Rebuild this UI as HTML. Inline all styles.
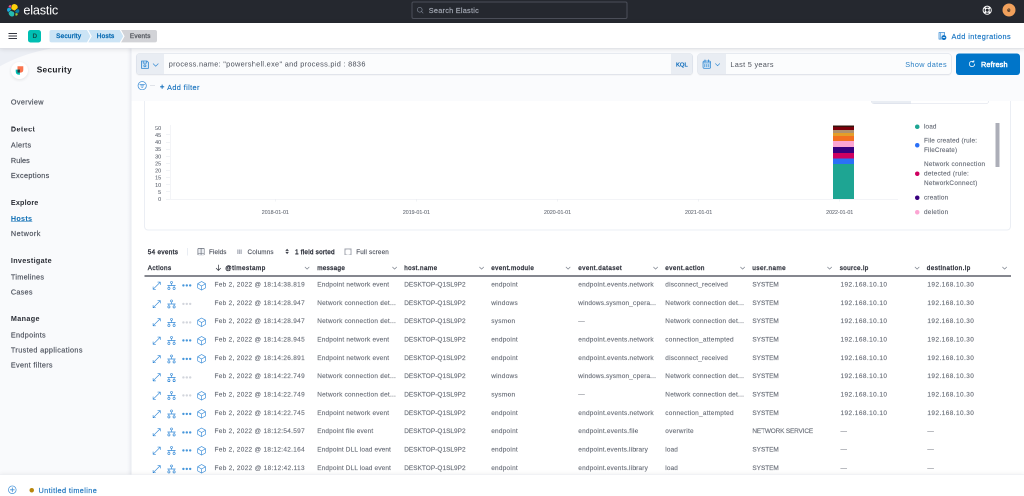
<!DOCTYPE html>
<html lang="en"><head><meta charset="utf-8"><title>Hosts - Events - Security - Elastic</title>
<style>
html,body{margin:0;padding:0;}
body{width:1024px;height:496px;overflow:hidden;position:relative;background:#fff;font-family:"Liberation Sans", sans-serif;-webkit-font-smoothing:antialiased;}
#app{position:absolute;left:0;top:0;width:2048px;height:992px;overflow:hidden;transform:scale(0.5);transform-origin:0 0;will-change:transform;}
.b{position:absolute;display:block;}
.t{position:absolute;white-space:nowrap;line-height:1;transform:translateY(-50%);}
</style></head>
<body><div id="app">
<div class="b" style="left:0px;top:0px;width:2048px;height:992px;background:#ffffff;"></div>
<div class="b" style="left:263px;top:96px;width:1785px;height:105.7px;background:#fafbfd;"></div>
<div class="b" style="left:0px;top:96px;width:263px;height:896px;background:#f9fafc;"></div>
<svg class="b" style="left:0px;top:96px;" width="120" height="40" viewBox="0 0 60 20"><path d="M0 0H54Q24 5 0 18.2Z" fill="#eceff5"/></svg>
<div class="b" style="left:253px;top:96px;width:10px;height:896px;background:linear-gradient(90deg, rgba(200,205,218,0) 0%, rgba(200,205,218,0.12) 50%, rgba(200,205,218,0.38) 100%);"></div>
<div class="b" style="left:0px;top:0px;width:2048px;height:46px;background:#25282f;"></div>
<div class="b" style="left:0px;top:46px;width:2048px;height:50px;background:#ffffff;box-shadow:0 1px 0 #dcdee5, 0 2px 10px rgba(0,0,0,0.12);"></div>
<svg class="b" style="left:12.8px;top:7.2px;" width="26.8" height="26.8" viewBox="0 0 32 32"><path d="M12.58 13.79l7 3.19 7.07-6.19a7.8 7.8 0 0 0 .15-1.55A7.86 7.86 0 0 0 12.46 4.8l-1.17 6.1z" fill="#fed10a"/><path d="M5.33 21.22a7.9 7.9 0 0 0 12.2 8.2l1.16-6.07-1.55-2.97-7.03-3.2z" fill="#24bbb1"/><path d="M5.29 9.1l4.8 1.13 1.05-5.45A3.79 3.79 0 0 0 5.29 9.1" fill="#ef5098"/><path d="M4.87 10.25a5.34 5.34 0 0 0-.05 10.06l6.73-6.08-1.23-2.64z" fill="#17a8e0"/><path d="M20.87 28.21a3.76 3.76 0 0 0 5.82-4.3l-4.8-1.12z" fill="#93c83e"/><path d="M21.85 21.53l5.28 1.23a5.34 5.34 0 0 0 .05-10.06l-6.9 6.05z" fill="#0779a1"/></svg>
<div class="t" style="left:46.8px;top:20.7px;font-size:25.4px;color:#ffffff;letter-spacing:-0.4px;">elastic</div>
<div class="b" style="left:823px;top:3px;width:432px;height:35px;background:#25282f;border:2px solid #4b4e58;border-radius:4px;box-sizing:border-box;"></div>
<svg class="b" style="left:832.6px;top:13px;" width="14.8" height="14.8" viewBox="0 0 16 16"><circle cx="7" cy="7" r="5.2" fill="none" stroke="#858d9b" stroke-width="1.3"/><path d="M11 11l3.2 3.2" stroke="#858d9b" stroke-width="1.3" stroke-linecap="round"/></svg>
<div class="t" style="left:857.6px;top:20.9px;font-size:14.6px;color:#a6abb6;-webkit-text-stroke:0.32px #a6abb6;letter-spacing:0.51px;">Search Elastic</div>
<svg class="b" style="left:1965.2px;top:11px;" width="18.8" height="18.8" viewBox="0 0 9.4 9.4"><circle cx="4.7" cy="4.7" r="4.1" fill="none" stroke="#fff" stroke-width="0.95"/><circle cx="4.7" cy="4.7" r="2.0" fill="none" stroke="#fff" stroke-width="0.95"/><path d="M1.9 1.9L3.2 3.2M7.5 1.9L6.2 3.2M1.9 7.5L3.2 6.2M7.5 7.5L6.2 6.2" stroke="#fff" stroke-width="1.7"/></svg>
<div class="b" style="left:2004.6px;top:7.4px;width:26px;height:26px;background:#f1a15c;border-radius:50%;"></div>
<div class="t" style="left:2014.2px;top:20.1px;font-size:12.4px;color:#2b2118;font-weight:700;">e</div>
<div class="b" style="left:17.2px;top:66.1px;width:17px;height:1.8px;background:#343741;"></div>
<div class="b" style="left:17.2px;top:71.26px;width:17px;height:1.8px;background:#343741;"></div>
<div class="b" style="left:17.2px;top:76.42px;width:17px;height:1.8px;background:#343741;"></div>
<div class="b" style="left:56px;top:60px;width:26px;height:25px;background:#00bfb3;border-radius:5px;"></div>
<div class="t" style="left:65.1px;top:72.1px;font-size:12.8px;color:#0c4f4b;font-weight:700;">D</div>
<svg class="b" style="left:99px;top:60px;" width="220" height="24.8" viewBox="0 0 110 12.4"><path d="M2 0H37.5L41 6.2L37.5 12.4H2Q0 12.4 0 10.4V2Q0 0 2 0Z" fill="#cce4f5"/><path d="M38.8 0H70.3L73.8 6.2L70.3 12.4H38.8L42.3 6.2Z" fill="#cce4f5"/><path d="M71.6 0H105.5Q107.5 0 107.5 2V10.4Q107.5 12.4 105.5 12.4H71.6L75.1 6.2Z" fill="#d2d3d7"/></svg>
<div class="t" style="left:112.2px;top:72.3px;font-size:12.8px;color:#0a6cb3;-webkit-text-stroke:0.77px #0a6cb3;letter-spacing:0.52px;">Security</div>
<div class="t" style="left:193.4px;top:72.3px;font-size:12.8px;color:#0a6cb3;-webkit-text-stroke:0.77px #0a6cb3;letter-spacing:0.58px;">Hosts</div>
<div class="t" style="left:259.8px;top:72.3px;font-size:12.8px;color:#5f6269;-webkit-text-stroke:0.77px #5f6269;letter-spacing:0.41px;">Events</div>
<svg class="b" style="left:1877.2px;top:63.8px;" width="16" height="16.4" viewBox="0 0 8 8.2"><path d="M6.1 3.2V0.5H0.5V7.1H3.2" fill="#e3f0fa" stroke="#3f8fd6" stroke-width="0.75" stroke-linejoin="round"/><path d="M2 0.6V7" stroke="#3f8fd6" stroke-width="0.6"/><circle cx="5.4" cy="5.6" r="2.45" fill="#0f72c4"/><path d="M4.2 5.6H6.6" stroke="#fff" stroke-width="0.8"/></svg>
<div class="t" style="left:1903px;top:72.9px;font-size:14.6px;color:#1573c2;-webkit-text-stroke:0.32px #1573c2;letter-spacing:0.86px;">Add integrations</div>
<div class="b" style="left:21.7px;top:124.2px;width:34px;height:34px;background:#ffffff;border-radius:50%;box-shadow:0 2px 6px rgba(0,0,0,0.10);"></div>
<svg class="b" style="left:30.6px;top:132px;" width="16" height="17.6" viewBox="0 0 80 88"><path d="M20 2H78V38Q78 66 50 66H20Z" fill="#fa744e"/><path d="M2 36H44V88H40Q2 88 2 52Z" fill="#00bfb3"/><path d="M20 36H44V66H20Z" fill="#343741"/></svg>
<div class="t" style="left:73.4px;top:140.4px;font-size:16.6px;color:#1a1c21;font-weight:700;letter-spacing:0.64px;">Security</div>
<div class="t" style="left:21.8px;top:203.98px;font-size:14.5px;color:#4a4f5a;-webkit-text-stroke:0.32px #4a4f5a;letter-spacing:0.67px;">Overview</div>
<div class="t" style="left:21.8px;top:258.41px;font-size:14.4px;color:#2b2e36;font-weight:700;letter-spacing:0.8px;">Detect</div>
<div class="t" style="left:21.8px;top:290.38px;font-size:14.5px;color:#4a4f5a;-webkit-text-stroke:0.32px #4a4f5a;letter-spacing:0.69px;">Alerts</div>
<div class="t" style="left:21.8px;top:320.78px;font-size:14.5px;color:#4a4f5a;-webkit-text-stroke:0.32px #4a4f5a;letter-spacing:0.15px;">Rules</div>
<div class="t" style="left:21.8px;top:351.18px;font-size:14.5px;color:#4a4f5a;-webkit-text-stroke:0.32px #4a4f5a;letter-spacing:0.65px;">Exceptions</div>
<div class="t" style="left:21.8px;top:405.01px;font-size:14.4px;color:#2b2e36;font-weight:700;letter-spacing:0.34px;">Explore</div>
<div class="t" style="left:21.8px;top:437.01px;font-size:14.4px;color:#0a6cb3;font-weight:700;text-decoration:underline;text-underline-offset:1.2px;text-decoration-thickness:1px;letter-spacing:0.56px;">Hosts</div>
<div class="t" style="left:21.8px;top:467.38px;font-size:14.5px;color:#4a4f5a;-webkit-text-stroke:0.32px #4a4f5a;letter-spacing:0.95px;">Network</div>
<div class="t" style="left:21.8px;top:521.21px;font-size:14.4px;color:#2b2e36;font-weight:700;letter-spacing:0.63px;">Investigate</div>
<div class="t" style="left:21.8px;top:553.58px;font-size:14.5px;color:#4a4f5a;-webkit-text-stroke:0.32px #4a4f5a;letter-spacing:0.59px;">Timelines</div>
<div class="t" style="left:21.8px;top:583.98px;font-size:14.5px;color:#4a4f5a;-webkit-text-stroke:0.32px #4a4f5a;letter-spacing:0.5px;">Cases</div>
<div class="t" style="left:21.8px;top:637.41px;font-size:14.4px;color:#2b2e36;font-weight:700;letter-spacing:0.73px;">Manage</div>
<div class="t" style="left:21.8px;top:669.98px;font-size:14.5px;color:#4a4f5a;-webkit-text-stroke:0.32px #4a4f5a;letter-spacing:0.63px;">Endpoints</div>
<div class="t" style="left:21.8px;top:699.98px;font-size:14.5px;color:#4a4f5a;-webkit-text-stroke:0.32px #4a4f5a;letter-spacing:0.73px;">Trusted applications</div>
<div class="t" style="left:21.8px;top:730.18px;font-size:14.5px;color:#4a4f5a;-webkit-text-stroke:0.32px #4a4f5a;letter-spacing:0.63px;">Event filters</div>
<div class="b" style="left:272.2px;top:107.2px;width:1113.8px;height:42px;background:#fbfcfd;border:1px solid #d3d9e4;border-radius:6px;box-sizing:border-box;box-shadow:0 2px 2px rgba(0,0,0,0.05);"></div>
<div class="b" style="left:273px;top:108.2px;width:55px;height:40px;background:#e9edf3;border-radius:5px 0 0 5px;"></div>
<svg class="b" style="left:282px;top:121px;" width="15.8" height="16.8" viewBox="0 0 7.9 8.4"><path d="M0.5 0.5H6L7.4 1.9V7.9H0.5Z" fill="#d4e6f5" stroke="#2e86d0" stroke-width="0.8" stroke-linejoin="round"/><path d="M2.2 0.6V2.6H5.4V0.6" fill="none" stroke="#2e86d0" stroke-width="0.7"/><circle cx="3.9" cy="5.3" r="1.05" fill="none" stroke="#2e86d0" stroke-width="0.7"/></svg>
<svg class="b" style="left:304.8px;top:126px;" width="12.8" height="8" viewBox="0 0 12 8"><path d="M1 1.5l5 5 5-5" fill="none" stroke="#3a8dd4" stroke-width="1.4" stroke-linecap="round" stroke-linejoin="round"/></svg>
<div class="t" style="left:337.6px;top:127.8px;font-size:14.7px;color:#4a4f5a;letter-spacing:0.61px;">process.name: &quot;powershell.exe&quot; and process.pid : 8836</div>
<div class="b" style="left:1342px;top:108.2px;width:43.2px;height:40px;background:#e9edf3;border-radius:0 5px 5px 0;"></div>
<div class="t" style="left:1352px;top:128.7px;font-size:11.6px;color:#1a73be;-webkit-text-stroke:0.7px #1a73be;letter-spacing:0.13px;">KQL</div>
<div class="b" style="left:1394.6px;top:107.2px;width:508.6px;height:42px;background:#fbfcfd;border:1px solid #d3d9e4;border-radius:6px;box-sizing:border-box;box-shadow:0 2px 2px rgba(0,0,0,0.05);"></div>
<div class="b" style="left:1395.6px;top:108.2px;width:56px;height:40px;background:#e9edf3;border-radius:5px 0 0 5px;"></div>
<svg class="b" style="left:1404.8px;top:119.2px;" width="17.2" height="18.8" viewBox="0 0 8.6 9.4"><rect x="0.5" y="1.5" width="7.6" height="7.4" rx="1.4" fill="#cfe3f4" stroke="#3a8dd4" stroke-width="0.75"/><path d="M2.5 0.5V2.2M6.1 0.5V2.2" stroke="#2e86d0" stroke-width="0.9" stroke-linecap="round"/><path d="M0.6 3.4H8" stroke="#2e86d0" stroke-width="0.6"/><path d="M2.3 4.6V7.6M4.3 4.6V7.6M6.3 4.6V7.6" stroke="#2e86d0" stroke-width="0.7"/></svg>
<svg class="b" style="left:1429.6px;top:125.8px;" width="10.4" height="6.8" viewBox="0 0 12 8"><path d="M1 1.5l5 5 5-5" fill="none" stroke="#3a8dd4" stroke-width="1.5" stroke-linecap="round" stroke-linejoin="round"/></svg>
<div class="t" style="left:1460.8px;top:128.5px;font-size:14.6px;color:#4f545e;letter-spacing:0.61px;">Last 5 years</div>
<div class="t" style="left:1810.4px;top:128.5px;font-size:14.6px;color:#2a7fc4;letter-spacing:0.73px;">Show dates</div>
<div class="b" style="left:1912.4px;top:107px;width:127.2px;height:42.6px;background:#0075c9;border-radius:6px;"></div>
<svg class="b" style="left:1935.8px;top:120.2px;" width="16" height="16" viewBox="0 0 16 16"><path d="M13.4 8a5.4 5.4 0 1 1-2.2-4.35" fill="none" stroke="#fff" stroke-width="1.5" stroke-linecap="round"/><path d="M11.7 0.9v3.1h-3.1" fill="none" stroke="#fff" stroke-width="1.5" stroke-linecap="round" stroke-linejoin="round"/></svg>
<div class="t" style="left:1962px;top:129.1px;font-size:14.6px;color:#ffffff;-webkit-text-stroke:0.88px #ffffff;letter-spacing:0.33px;">Refresh</div>
<svg class="b" style="left:275.2px;top:161.8px;" width="18.8" height="18.8" viewBox="0 0 9.4 9.4"><circle cx="4.7" cy="4.7" r="4.15" fill="none" stroke="#3f8fd6" stroke-width="0.75"/><path d="M2.3 3.5H7.1M3.2 4.9H6.2M4.1 6.3H5.3" stroke="#3f8fd6" stroke-width="0.75" stroke-linecap="round"/></svg>
<div class="b" style="left:299.8px;top:170.4px;width:10px;height:0.9px;background:#c5cad4;"></div>
<div class="t" style="left:320px;top:173.2px;font-size:14.8px;color:#1a73be;-webkit-text-stroke:0.89px #1a73be;">+</div>
<div class="t" style="left:334.2px;top:175.3px;font-size:14.6px;color:#1a73be;-webkit-text-stroke:0.32px #1a73be;letter-spacing:0.78px;">Add filter</div>
<div class="b" style="left:288px;top:201.7px;width:1734px;height:259.1px;background:#ffffff;border:2px solid #ebeef4;border-top:none;border-radius:0 0 8px 8px;box-sizing:border-box;"></div>
<div class="b" style="left:1742px;top:192px;width:236px;height:16px;background:#ffffff;border:1px solid #d6dbe6;border-radius:6px;box-sizing:border-box;"></div>
<div class="b" style="left:1742.6px;top:192px;width:79.2px;height:15.2px;background:#e9edf3;border-radius:0 0 0 5px;"></div>
<div class="b" style="left:263px;top:180px;width:1785px;height:21.7px;background:#fafbfd;"></div>
<div class="t" style="left:322.4px;top:255.7px;font-size:10.9px;color:#6a6f79;-webkit-text-stroke:0.24px #6a6f79;transform:translate(-100%,-50%);">50</div>
<div class="b" style="left:332px;top:255.1px;width:8.4px;height:1px;background:#e3e6ec;"></div>
<div class="t" style="left:322.4px;top:269.94px;font-size:10.9px;color:#6a6f79;-webkit-text-stroke:0.24px #6a6f79;transform:translate(-100%,-50%);">45</div>
<div class="b" style="left:332px;top:269.34px;width:8.4px;height:1px;background:#e3e6ec;"></div>
<div class="t" style="left:322.4px;top:284.18px;font-size:10.9px;color:#6a6f79;-webkit-text-stroke:0.24px #6a6f79;transform:translate(-100%,-50%);">40</div>
<div class="b" style="left:332px;top:283.58px;width:8.4px;height:1px;background:#e3e6ec;"></div>
<div class="t" style="left:322.4px;top:298.42px;font-size:10.9px;color:#6a6f79;-webkit-text-stroke:0.24px #6a6f79;transform:translate(-100%,-50%);">35</div>
<div class="b" style="left:332px;top:297.82px;width:8.4px;height:1px;background:#e3e6ec;"></div>
<div class="t" style="left:322.4px;top:312.66px;font-size:10.9px;color:#6a6f79;-webkit-text-stroke:0.24px #6a6f79;transform:translate(-100%,-50%);">30</div>
<div class="b" style="left:332px;top:312.06px;width:8.4px;height:1px;background:#e3e6ec;"></div>
<div class="t" style="left:322.4px;top:326.9px;font-size:10.9px;color:#6a6f79;-webkit-text-stroke:0.24px #6a6f79;transform:translate(-100%,-50%);">25</div>
<div class="b" style="left:332px;top:326.3px;width:8.4px;height:1px;background:#e3e6ec;"></div>
<div class="t" style="left:322.4px;top:341.14px;font-size:10.9px;color:#6a6f79;-webkit-text-stroke:0.24px #6a6f79;transform:translate(-100%,-50%);">20</div>
<div class="b" style="left:332px;top:340.54px;width:8.4px;height:1px;background:#e3e6ec;"></div>
<div class="t" style="left:322.4px;top:355.38px;font-size:10.9px;color:#6a6f79;-webkit-text-stroke:0.24px #6a6f79;transform:translate(-100%,-50%);">15</div>
<div class="b" style="left:332px;top:354.78px;width:8.4px;height:1px;background:#e3e6ec;"></div>
<div class="t" style="left:322.4px;top:369.62px;font-size:10.9px;color:#6a6f79;-webkit-text-stroke:0.24px #6a6f79;transform:translate(-100%,-50%);">10</div>
<div class="b" style="left:332px;top:369.02px;width:8.4px;height:1px;background:#e3e6ec;"></div>
<div class="t" style="left:322.4px;top:383.86px;font-size:10.9px;color:#6a6f79;-webkit-text-stroke:0.24px #6a6f79;transform:translate(-100%,-50%);">5</div>
<div class="b" style="left:332px;top:383.26px;width:8.4px;height:1px;background:#e3e6ec;"></div>
<div class="t" style="left:322.4px;top:398.1px;font-size:10.9px;color:#6a6f79;-webkit-text-stroke:0.24px #6a6f79;transform:translate(-100%,-50%);">0</div>
<div class="b" style="left:332px;top:397.5px;width:8.4px;height:1px;background:#e3e6ec;"></div>
<div class="b" style="left:340.2px;top:250px;width:1.2px;height:148.6px;background:#e6e9ef;"></div>
<div class="b" style="left:340.2px;top:397.8px;width:1456px;height:1.2px;background:#e6e9ef;"></div>
<div class="t" style="left:550.6px;top:423.7px;font-size:10.6px;color:#6a6f79;-webkit-text-stroke:0.23px #6a6f79;transform:translate(-50%,-50%);">2018-01-01</div>
<div class="b" style="left:549.5px;top:398.6px;width:1px;height:4.8px;background:#e3e6ec;"></div>
<div class="t" style="left:832.8px;top:423.7px;font-size:10.6px;color:#6a6f79;-webkit-text-stroke:0.23px #6a6f79;transform:translate(-50%,-50%);">2019-01-01</div>
<div class="b" style="left:831.7px;top:398.6px;width:1px;height:4.8px;background:#e3e6ec;"></div>
<div class="t" style="left:1115px;top:423.7px;font-size:10.6px;color:#6a6f79;-webkit-text-stroke:0.23px #6a6f79;transform:translate(-50%,-50%);">2020-01-01</div>
<div class="b" style="left:1113.9px;top:398.6px;width:1px;height:4.8px;background:#e3e6ec;"></div>
<div class="t" style="left:1397.2px;top:423.7px;font-size:10.6px;color:#6a6f79;-webkit-text-stroke:0.23px #6a6f79;transform:translate(-50%,-50%);">2021-01-01</div>
<div class="b" style="left:1396.1px;top:398.6px;width:1px;height:4.8px;background:#e3e6ec;"></div>
<div class="t" style="left:1679.4px;top:423.7px;font-size:10.6px;color:#6a6f79;-webkit-text-stroke:0.23px #6a6f79;transform:translate(-50%,-50%);">2022-01-01</div>
<div class="b" style="left:1678.3px;top:398.6px;width:1px;height:4.8px;background:#e3e6ec;"></div>
<div class="b" style="left:1666px;top:251.2px;width:42px;height:2.4px;background:#34130c;"></div>
<div class="b" style="left:1666px;top:253.6px;width:42px;height:6.6px;background:#7b000b;"></div>
<div class="b" style="left:1666px;top:260.2px;width:42px;height:5.6px;background:#b0916f;"></div>
<div class="b" style="left:1666px;top:265.8px;width:42px;height:6px;background:#e49e29;"></div>
<div class="b" style="left:1666px;top:271.8px;width:42px;height:10.6px;background:#f37020;"></div>
<div class="b" style="left:1666px;top:282.4px;width:42px;height:11.6px;background:#fca5d3;"></div>
<div class="b" style="left:1666px;top:294px;width:42px;height:11.6px;background:#38007e;"></div>
<div class="b" style="left:1666px;top:305.6px;width:42px;height:11.4px;background:#ce0060;"></div>
<div class="b" style="left:1666px;top:317px;width:42px;height:11.4px;background:#2b70f7;"></div>
<div class="b" style="left:1666px;top:328.4px;width:42px;height:69.8px;background:#1ea593;"></div>
<div class="b" style="left:1830px;top:248.8px;width:8.8px;height:8.8px;background:#1ea593;border-radius:50%;"></div>
<div class="t" style="left:1848px;top:252.8px;font-size:12.7px;color:#676c77;-webkit-text-stroke:0.28px #676c77;letter-spacing:0.3px;">load</div>
<div class="b" style="left:1830px;top:286.2px;width:8.8px;height:8.8px;background:#2b70f7;border-radius:50%;"></div>
<div class="t" style="left:1848px;top:280.6px;font-size:12.7px;color:#676c77;-webkit-text-stroke:0.28px #676c77;letter-spacing:0.4px;">File created (rule:</div>
<div class="t" style="left:1848px;top:299.8px;font-size:12.7px;color:#676c77;-webkit-text-stroke:0.28px #676c77;letter-spacing:0.34px;">FileCreate)</div>
<div class="b" style="left:1830px;top:343px;width:8.8px;height:8.8px;background:#ce0060;border-radius:50%;"></div>
<div class="t" style="left:1848px;top:327.8px;font-size:12.7px;color:#676c77;-webkit-text-stroke:0.28px #676c77;letter-spacing:0.63px;">Network connection</div>
<div class="t" style="left:1848px;top:347px;font-size:12.7px;color:#676c77;-webkit-text-stroke:0.28px #676c77;letter-spacing:0.61px;">detected (rule:</div>
<div class="t" style="left:1848px;top:366.4px;font-size:12.7px;color:#676c77;-webkit-text-stroke:0.28px #676c77;letter-spacing:0.62px;">NetworkConnect)</div>
<div class="b" style="left:1830px;top:391.4px;width:8.8px;height:8.8px;background:#38007e;border-radius:50%;"></div>
<div class="t" style="left:1848px;top:395.4px;font-size:12.7px;color:#676c77;-webkit-text-stroke:0.28px #676c77;letter-spacing:0.45px;">creation</div>
<div class="b" style="left:1830px;top:419.8px;width:8.8px;height:8.8px;background:#fca5d3;border-radius:50%;"></div>
<div class="t" style="left:1848px;top:423.8px;font-size:12.7px;color:#676c77;-webkit-text-stroke:0.28px #676c77;letter-spacing:0.54px;">deletion</div>
<div class="b" style="left:1990.6px;top:245.8px;width:8.8px;height:88.4px;background:#acaeb8;"></div>
<div class="t" style="left:295.4px;top:503.5px;font-size:12.8px;color:#343741;-webkit-text-stroke:0.77px #343741;letter-spacing:0.63px;">54 events</div>
<div class="b" style="left:375px;top:495.6px;width:1.2px;height:15px;background:#d3dae6;"></div>
<svg class="b" style="left:394.8px;top:496.2px;" width="14.4" height="14.4" viewBox="0 0 7.2 7.2"><rect x="0.4" y="0.4" width="6.4" height="6.4" rx="0.8" fill="#eef0f4" stroke="#6a707b" stroke-width="0.7"/><path d="M3.6 0.4V6.8" stroke="#6a707b" stroke-width="0.7"/><path d="M0.4 5.6H6.8" stroke="#6a707b" stroke-width="0.5"/></svg>
<div class="t" style="left:418px;top:503.5px;font-size:12.6px;color:#4a4f5a;-webkit-text-stroke:0.28px #4a4f5a;letter-spacing:0.23px;">Fields</div>
<svg class="b" style="left:474.4px;top:498.6px;" width="10" height="9.2" viewBox="0 0 5 4.6"><path d="M0.8 0V4.6M2.5 0V4.6M4.2 0V4.6" stroke="#aeb2bc" stroke-width="1.25"/></svg>
<div class="t" style="left:495px;top:503.5px;font-size:12.6px;color:#4a4f5a;-webkit-text-stroke:0.28px #4a4f5a;letter-spacing:0.41px;">Columns</div>
<svg class="b" style="left:569.6px;top:497.4px;" width="8.4" height="11.6" viewBox="0 0 4.2 5.8"><path d="M2.1 0.2L3.9 2.4H0.3ZM2.1 5.6L3.9 3.4H0.3Z" fill="#3d404a"/></svg>
<div class="t" style="left:590px;top:503.5px;font-size:12.8px;color:#343741;-webkit-text-stroke:0.77px #343741;letter-spacing:0.45px;">1 field sorted</div>
<svg class="b" style="left:689.4px;top:496.6px;" width="14" height="13.6" viewBox="0 0 7 6.8"><path d="M0.45 2.4V0.45H2.6M4.4 0.45H6.55V2.4M6.55 4.4V6.35H4.4M2.6 6.35H0.45V4.4" fill="none" stroke="#7b818c" stroke-width="0.9"/><rect x="0.45" y="0.45" width="6.1" height="5.9" fill="none" stroke="#9da1ab" stroke-width="0.9"/></svg>
<div class="t" style="left:712.4px;top:503.5px;font-size:12.6px;color:#4a4f5a;-webkit-text-stroke:0.28px #4a4f5a;letter-spacing:0.36px;">Full screen</div>
<div class="t" style="left:295.4px;top:535.7px;font-size:12.6px;color:#343741;-webkit-text-stroke:0.76px #343741;letter-spacing:0.93px;">Actions</div>
<svg class="b" style="left:431.2px;top:529.2px;" width="11.6" height="13.2" viewBox="0 0 5.8 6.6"><path d="M2.9 0.5V6M0.7 3.8L2.9 6L5.1 3.8" fill="none" stroke="#343741" stroke-width="0.7" stroke-linecap="round" stroke-linejoin="round"/></svg>
<div class="t" style="left:450.4px;top:535.7px;font-size:12.6px;color:#343741;-webkit-text-stroke:0.76px #343741;letter-spacing:1.03px;">@timestamp</div>
<svg class="b" style="left:608.8px;top:533.4px;" width="10.4" height="6.4" viewBox="0 0 5.2 3.2"><path d="M0.6 0.6L2.6 2.6L4.6 0.6" fill="none" stroke="#7b818c" stroke-width="0.7" stroke-linecap="round" stroke-linejoin="round"/></svg>
<div class="t" style="left:634.4px;top:535.7px;font-size:12.6px;color:#343741;-webkit-text-stroke:0.76px #343741;letter-spacing:0.72px;">message</div>
<svg class="b" style="left:783.8px;top:533.4px;" width="10.4" height="6.4" viewBox="0 0 5.2 3.2"><path d="M0.6 0.6L2.6 2.6L4.6 0.6" fill="none" stroke="#7b818c" stroke-width="0.7" stroke-linecap="round" stroke-linejoin="round"/></svg>
<div class="t" style="left:808.4px;top:535.7px;font-size:12.6px;color:#343741;-webkit-text-stroke:0.76px #343741;letter-spacing:0.88px;">host.name</div>
<svg class="b" style="left:957.8px;top:533.4px;" width="10.4" height="6.4" viewBox="0 0 5.2 3.2"><path d="M0.6 0.6L2.6 2.6L4.6 0.6" fill="none" stroke="#7b818c" stroke-width="0.7" stroke-linecap="round" stroke-linejoin="round"/></svg>
<div class="t" style="left:982.4px;top:535.7px;font-size:12.6px;color:#343741;-webkit-text-stroke:0.76px #343741;letter-spacing:0.88px;">event.module</div>
<svg class="b" style="left:1130.8px;top:533.4px;" width="10.4" height="6.4" viewBox="0 0 5.2 3.2"><path d="M0.6 0.6L2.6 2.6L4.6 0.6" fill="none" stroke="#7b818c" stroke-width="0.7" stroke-linecap="round" stroke-linejoin="round"/></svg>
<div class="t" style="left:1156.6px;top:535.7px;font-size:12.6px;color:#343741;-webkit-text-stroke:0.76px #343741;letter-spacing:0.93px;">event.dataset</div>
<svg class="b" style="left:1305.8px;top:533.4px;" width="10.4" height="6.4" viewBox="0 0 5.2 3.2"><path d="M0.6 0.6L2.6 2.6L4.6 0.6" fill="none" stroke="#7b818c" stroke-width="0.7" stroke-linecap="round" stroke-linejoin="round"/></svg>
<div class="t" style="left:1330.6px;top:535.7px;font-size:12.6px;color:#343741;-webkit-text-stroke:0.76px #343741;letter-spacing:0.94px;">event.action</div>
<svg class="b" style="left:1480.2px;top:533.4px;" width="10.4" height="6.4" viewBox="0 0 5.2 3.2"><path d="M0.6 0.6L2.6 2.6L4.6 0.6" fill="none" stroke="#7b818c" stroke-width="0.7" stroke-linecap="round" stroke-linejoin="round"/></svg>
<div class="t" style="left:1504.8px;top:535.7px;font-size:12.6px;color:#343741;-webkit-text-stroke:0.76px #343741;letter-spacing:0.97px;">user.name</div>
<svg class="b" style="left:1653.8px;top:533.4px;" width="10.4" height="6.4" viewBox="0 0 5.2 3.2"><path d="M0.6 0.6L2.6 2.6L4.6 0.6" fill="none" stroke="#7b818c" stroke-width="0.7" stroke-linecap="round" stroke-linejoin="round"/></svg>
<div class="t" style="left:1679.4px;top:535.7px;font-size:12.6px;color:#343741;-webkit-text-stroke:0.76px #343741;letter-spacing:0.76px;">source.ip</div>
<svg class="b" style="left:1828.8px;top:533.4px;" width="10.4" height="6.4" viewBox="0 0 5.2 3.2"><path d="M0.6 0.6L2.6 2.6L4.6 0.6" fill="none" stroke="#7b818c" stroke-width="0.7" stroke-linecap="round" stroke-linejoin="round"/></svg>
<div class="t" style="left:1853.6px;top:535.7px;font-size:12.6px;color:#343741;-webkit-text-stroke:0.76px #343741;letter-spacing:0.97px;">destination.ip</div>
<svg class="b" style="left:2004px;top:533.4px;" width="10.4" height="6.4" viewBox="0 0 5.2 3.2"><path d="M0.6 0.6L2.6 2.6L4.6 0.6" fill="none" stroke="#7b818c" stroke-width="0.7" stroke-linecap="round" stroke-linejoin="round"/></svg>
<div class="b" style="left:288.6px;top:550px;width:1733.4px;height:4px;background:#85878f;"></div>
<svg class="b" style="left:305.4px;top:563px;" width="16.8" height="16.8" viewBox="0 0 8.4 8.4"><path d="M5.3 0.6H7.8V3.1M7.8 0.6L0.6 7.8M0.6 5.3V7.8H3.1" fill="none" stroke="#3087d6" stroke-width="0.64" stroke-linecap="round" stroke-linejoin="round"/></svg>
<svg class="b" style="left:334.2px;top:562.2px;" width="18" height="18" viewBox="0 0 9 9"><circle cx="4.5" cy="1.4" r="1" fill="none" stroke="#3087d6" stroke-width="0.64"/><path d="M4.5 2.4V4.5M0.4 4.5H8.6M1.9 4.5V6.2M7.1 4.5V6.2" fill="none" stroke="#3087d6" stroke-width="0.64"/><circle cx="1.9" cy="7.4" r="1.1" fill="none" stroke="#3087d6" stroke-width="0.64"/><circle cx="7.1" cy="7.4" r="1.1" fill="none" stroke="#3087d6" stroke-width="0.64"/></svg>
<svg class="b" style="left:364.4px;top:568.4px;" width="19.6" height="5.6" viewBox="0 0 9.8 2.8"><circle cx="1.4" cy="1.4" r="1.2" fill="#4596db"/><circle cx="4.8" cy="1.4" r="1.2" fill="#4596db"/><circle cx="8.2" cy="1.4" r="1.2" fill="#4596db"/></svg>
<svg class="b" style="left:394px;top:561.8px;" width="18.4" height="19.2" viewBox="0 0 9.2 9.6"><path d="M4.6 0.5L8.5 2.7V6.9L4.6 9.1L0.7 6.9V2.7Z" fill="none" stroke="#3087d6" stroke-width="0.64" stroke-linejoin="round"/><path d="M0.9 2.9L4.6 5L8.3 2.9M4.6 5V9" fill="none" stroke="#3087d6" stroke-width="0.64" stroke-linejoin="round"/></svg>
<div class="t" style="left:429px;top:569px;font-size:12.9px;color:#6a6f79;-webkit-text-stroke:0.28px #6a6f79;letter-spacing:0.64px;">Feb 2, 2022 @ 18:14:38.819</div>
<div class="t" style="left:634.4px;top:569px;font-size:12.9px;color:#6a6f79;-webkit-text-stroke:0.28px #6a6f79;letter-spacing:0.43px;">Endpoint network event</div>
<div class="t" style="left:808.4px;top:569px;font-size:12.9px;color:#6a6f79;-webkit-text-stroke:0.28px #6a6f79;letter-spacing:0.09px;">DESKTOP-Q1SL9P2</div>
<div class="t" style="left:982.4px;top:569px;font-size:12.9px;color:#6a6f79;-webkit-text-stroke:0.28px #6a6f79;letter-spacing:0.51px;">endpoint</div>
<div class="t" style="left:1156.6px;top:569px;font-size:12.9px;color:#6a6f79;-webkit-text-stroke:0.28px #6a6f79;letter-spacing:0.49px;">endpoint.events.network</div>
<div class="t" style="left:1330.6px;top:569px;font-size:12.9px;color:#6a6f79;-webkit-text-stroke:0.28px #6a6f79;letter-spacing:0.42px;">disconnect_received</div>
<div class="t" style="left:1504.8px;top:569px;font-size:12.9px;color:#6a6f79;-webkit-text-stroke:0.28px #6a6f79;letter-spacing:-0.04px;">SYSTEM</div>
<div class="t" style="left:1681px;top:569px;font-size:12.9px;color:#6a6f79;-webkit-text-stroke:0.28px #6a6f79;letter-spacing:0.88px;">192.168.10.10</div>
<div class="t" style="left:1854.8px;top:569px;font-size:12.9px;color:#6a6f79;-webkit-text-stroke:0.28px #6a6f79;letter-spacing:0.88px;">192.168.10.30</div>
<svg class="b" style="left:305.4px;top:599.66px;" width="16.8" height="16.8" viewBox="0 0 8.4 8.4"><path d="M5.3 0.6H7.8V3.1M7.8 0.6L0.6 7.8M0.6 5.3V7.8H3.1" fill="none" stroke="#3087d6" stroke-width="0.64" stroke-linecap="round" stroke-linejoin="round"/></svg>
<svg class="b" style="left:334.2px;top:598.86px;" width="18" height="18" viewBox="0 0 9 9"><circle cx="4.5" cy="1.4" r="1" fill="none" stroke="#3087d6" stroke-width="0.64"/><path d="M4.5 2.4V4.5M0.4 4.5H8.6M1.9 4.5V6.2M7.1 4.5V6.2" fill="none" stroke="#3087d6" stroke-width="0.64"/><circle cx="1.9" cy="7.4" r="1.1" fill="none" stroke="#3087d6" stroke-width="0.64"/><circle cx="7.1" cy="7.4" r="1.1" fill="none" stroke="#3087d6" stroke-width="0.64"/></svg>
<svg class="b" style="left:364.4px;top:605.06px;" width="19.6" height="5.6" viewBox="0 0 9.8 2.8"><circle cx="1.4" cy="1.4" r="1.2" fill="#d2d5dc"/><circle cx="4.8" cy="1.4" r="1.2" fill="#d2d5dc"/><circle cx="8.2" cy="1.4" r="1.2" fill="#d2d5dc"/></svg>
<div class="t" style="left:429px;top:605.66px;font-size:12.9px;color:#6a6f79;-webkit-text-stroke:0.28px #6a6f79;letter-spacing:0.64px;">Feb 2, 2022 @ 18:14:28.947</div>
<div class="t" style="left:634.4px;top:605.66px;font-size:12.9px;color:#6a6f79;-webkit-text-stroke:0.28px #6a6f79;letter-spacing:0.49px;">Network connection det...</div>
<div class="t" style="left:808.4px;top:605.66px;font-size:12.9px;color:#6a6f79;-webkit-text-stroke:0.28px #6a6f79;letter-spacing:0.09px;">DESKTOP-Q1SL9P2</div>
<div class="t" style="left:982.4px;top:605.66px;font-size:12.9px;color:#6a6f79;-webkit-text-stroke:0.28px #6a6f79;letter-spacing:0.59px;">windows</div>
<div class="t" style="left:1156.6px;top:605.66px;font-size:12.9px;color:#6a6f79;-webkit-text-stroke:0.28px #6a6f79;letter-spacing:0.31px;">windows.sysmon_opera...</div>
<div class="t" style="left:1330.6px;top:605.66px;font-size:12.9px;color:#6a6f79;-webkit-text-stroke:0.28px #6a6f79;letter-spacing:0.49px;">Network connection det...</div>
<div class="t" style="left:1504.8px;top:605.66px;font-size:12.9px;color:#6a6f79;-webkit-text-stroke:0.28px #6a6f79;letter-spacing:-0.04px;">SYSTEM</div>
<div class="t" style="left:1681px;top:605.66px;font-size:12.9px;color:#6a6f79;-webkit-text-stroke:0.28px #6a6f79;letter-spacing:0.88px;">192.168.10.10</div>
<div class="t" style="left:1854.8px;top:605.66px;font-size:12.9px;color:#6a6f79;-webkit-text-stroke:0.28px #6a6f79;letter-spacing:0.88px;">192.168.10.30</div>
<svg class="b" style="left:305.4px;top:636.32px;" width="16.8" height="16.8" viewBox="0 0 8.4 8.4"><path d="M5.3 0.6H7.8V3.1M7.8 0.6L0.6 7.8M0.6 5.3V7.8H3.1" fill="none" stroke="#3087d6" stroke-width="0.64" stroke-linecap="round" stroke-linejoin="round"/></svg>
<svg class="b" style="left:334.2px;top:635.52px;" width="18" height="18" viewBox="0 0 9 9"><circle cx="4.5" cy="1.4" r="1" fill="none" stroke="#3087d6" stroke-width="0.64"/><path d="M4.5 2.4V4.5M0.4 4.5H8.6M1.9 4.5V6.2M7.1 4.5V6.2" fill="none" stroke="#3087d6" stroke-width="0.64"/><circle cx="1.9" cy="7.4" r="1.1" fill="none" stroke="#3087d6" stroke-width="0.64"/><circle cx="7.1" cy="7.4" r="1.1" fill="none" stroke="#3087d6" stroke-width="0.64"/></svg>
<svg class="b" style="left:364.4px;top:641.72px;" width="19.6" height="5.6" viewBox="0 0 9.8 2.8"><circle cx="1.4" cy="1.4" r="1.2" fill="#d2d5dc"/><circle cx="4.8" cy="1.4" r="1.2" fill="#d2d5dc"/><circle cx="8.2" cy="1.4" r="1.2" fill="#d2d5dc"/></svg>
<svg class="b" style="left:394px;top:635.12px;" width="18.4" height="19.2" viewBox="0 0 9.2 9.6"><path d="M4.6 0.5L8.5 2.7V6.9L4.6 9.1L0.7 6.9V2.7Z" fill="none" stroke="#3087d6" stroke-width="0.64" stroke-linejoin="round"/><path d="M0.9 2.9L4.6 5L8.3 2.9M4.6 5V9" fill="none" stroke="#3087d6" stroke-width="0.64" stroke-linejoin="round"/></svg>
<div class="t" style="left:429px;top:642.32px;font-size:12.9px;color:#6a6f79;-webkit-text-stroke:0.28px #6a6f79;letter-spacing:0.64px;">Feb 2, 2022 @ 18:14:28.947</div>
<div class="t" style="left:634.4px;top:642.32px;font-size:12.9px;color:#6a6f79;-webkit-text-stroke:0.28px #6a6f79;letter-spacing:0.49px;">Network connection det...</div>
<div class="t" style="left:808.4px;top:642.32px;font-size:12.9px;color:#6a6f79;-webkit-text-stroke:0.28px #6a6f79;letter-spacing:0.09px;">DESKTOP-Q1SL9P2</div>
<div class="t" style="left:982.4px;top:642.32px;font-size:12.9px;color:#6a6f79;-webkit-text-stroke:0.28px #6a6f79;letter-spacing:0.66px;">sysmon</div>
<div class="t" style="left:1156.6px;top:642.32px;font-size:12.9px;color:#6a6f79;-webkit-text-stroke:0.28px #6a6f79;">—</div>
<div class="t" style="left:1330.6px;top:642.32px;font-size:12.9px;color:#6a6f79;-webkit-text-stroke:0.28px #6a6f79;letter-spacing:0.49px;">Network connection det...</div>
<div class="t" style="left:1504.8px;top:642.32px;font-size:12.9px;color:#6a6f79;-webkit-text-stroke:0.28px #6a6f79;letter-spacing:-0.04px;">SYSTEM</div>
<div class="t" style="left:1681px;top:642.32px;font-size:12.9px;color:#6a6f79;-webkit-text-stroke:0.28px #6a6f79;letter-spacing:0.88px;">192.168.10.10</div>
<div class="t" style="left:1854.8px;top:642.32px;font-size:12.9px;color:#6a6f79;-webkit-text-stroke:0.28px #6a6f79;letter-spacing:0.88px;">192.168.10.30</div>
<svg class="b" style="left:305.4px;top:672.98px;" width="16.8" height="16.8" viewBox="0 0 8.4 8.4"><path d="M5.3 0.6H7.8V3.1M7.8 0.6L0.6 7.8M0.6 5.3V7.8H3.1" fill="none" stroke="#3087d6" stroke-width="0.64" stroke-linecap="round" stroke-linejoin="round"/></svg>
<svg class="b" style="left:334.2px;top:672.18px;" width="18" height="18" viewBox="0 0 9 9"><circle cx="4.5" cy="1.4" r="1" fill="none" stroke="#3087d6" stroke-width="0.64"/><path d="M4.5 2.4V4.5M0.4 4.5H8.6M1.9 4.5V6.2M7.1 4.5V6.2" fill="none" stroke="#3087d6" stroke-width="0.64"/><circle cx="1.9" cy="7.4" r="1.1" fill="none" stroke="#3087d6" stroke-width="0.64"/><circle cx="7.1" cy="7.4" r="1.1" fill="none" stroke="#3087d6" stroke-width="0.64"/></svg>
<svg class="b" style="left:364.4px;top:678.38px;" width="19.6" height="5.6" viewBox="0 0 9.8 2.8"><circle cx="1.4" cy="1.4" r="1.2" fill="#4596db"/><circle cx="4.8" cy="1.4" r="1.2" fill="#4596db"/><circle cx="8.2" cy="1.4" r="1.2" fill="#4596db"/></svg>
<svg class="b" style="left:394px;top:671.78px;" width="18.4" height="19.2" viewBox="0 0 9.2 9.6"><path d="M4.6 0.5L8.5 2.7V6.9L4.6 9.1L0.7 6.9V2.7Z" fill="none" stroke="#3087d6" stroke-width="0.64" stroke-linejoin="round"/><path d="M0.9 2.9L4.6 5L8.3 2.9M4.6 5V9" fill="none" stroke="#3087d6" stroke-width="0.64" stroke-linejoin="round"/></svg>
<div class="t" style="left:429px;top:678.98px;font-size:12.9px;color:#6a6f79;-webkit-text-stroke:0.28px #6a6f79;letter-spacing:0.64px;">Feb 2, 2022 @ 18:14:28.945</div>
<div class="t" style="left:634.4px;top:678.98px;font-size:12.9px;color:#6a6f79;-webkit-text-stroke:0.28px #6a6f79;letter-spacing:0.43px;">Endpoint network event</div>
<div class="t" style="left:808.4px;top:678.98px;font-size:12.9px;color:#6a6f79;-webkit-text-stroke:0.28px #6a6f79;letter-spacing:0.09px;">DESKTOP-Q1SL9P2</div>
<div class="t" style="left:982.4px;top:678.98px;font-size:12.9px;color:#6a6f79;-webkit-text-stroke:0.28px #6a6f79;letter-spacing:0.51px;">endpoint</div>
<div class="t" style="left:1156.6px;top:678.98px;font-size:12.9px;color:#6a6f79;-webkit-text-stroke:0.28px #6a6f79;letter-spacing:0.49px;">endpoint.events.network</div>
<div class="t" style="left:1330.6px;top:678.98px;font-size:12.9px;color:#6a6f79;-webkit-text-stroke:0.28px #6a6f79;letter-spacing:0.51px;">connection_attempted</div>
<div class="t" style="left:1504.8px;top:678.98px;font-size:12.9px;color:#6a6f79;-webkit-text-stroke:0.28px #6a6f79;letter-spacing:-0.04px;">SYSTEM</div>
<div class="t" style="left:1681px;top:678.98px;font-size:12.9px;color:#6a6f79;-webkit-text-stroke:0.28px #6a6f79;letter-spacing:0.88px;">192.168.10.10</div>
<div class="t" style="left:1854.8px;top:678.98px;font-size:12.9px;color:#6a6f79;-webkit-text-stroke:0.28px #6a6f79;letter-spacing:0.88px;">192.168.10.30</div>
<svg class="b" style="left:305.4px;top:709.64px;" width="16.8" height="16.8" viewBox="0 0 8.4 8.4"><path d="M5.3 0.6H7.8V3.1M7.8 0.6L0.6 7.8M0.6 5.3V7.8H3.1" fill="none" stroke="#3087d6" stroke-width="0.64" stroke-linecap="round" stroke-linejoin="round"/></svg>
<svg class="b" style="left:334.2px;top:708.84px;" width="18" height="18" viewBox="0 0 9 9"><circle cx="4.5" cy="1.4" r="1" fill="none" stroke="#3087d6" stroke-width="0.64"/><path d="M4.5 2.4V4.5M0.4 4.5H8.6M1.9 4.5V6.2M7.1 4.5V6.2" fill="none" stroke="#3087d6" stroke-width="0.64"/><circle cx="1.9" cy="7.4" r="1.1" fill="none" stroke="#3087d6" stroke-width="0.64"/><circle cx="7.1" cy="7.4" r="1.1" fill="none" stroke="#3087d6" stroke-width="0.64"/></svg>
<svg class="b" style="left:364.4px;top:715.04px;" width="19.6" height="5.6" viewBox="0 0 9.8 2.8"><circle cx="1.4" cy="1.4" r="1.2" fill="#4596db"/><circle cx="4.8" cy="1.4" r="1.2" fill="#4596db"/><circle cx="8.2" cy="1.4" r="1.2" fill="#4596db"/></svg>
<svg class="b" style="left:394px;top:708.44px;" width="18.4" height="19.2" viewBox="0 0 9.2 9.6"><path d="M4.6 0.5L8.5 2.7V6.9L4.6 9.1L0.7 6.9V2.7Z" fill="none" stroke="#3087d6" stroke-width="0.64" stroke-linejoin="round"/><path d="M0.9 2.9L4.6 5L8.3 2.9M4.6 5V9" fill="none" stroke="#3087d6" stroke-width="0.64" stroke-linejoin="round"/></svg>
<div class="t" style="left:429px;top:715.64px;font-size:12.9px;color:#6a6f79;-webkit-text-stroke:0.28px #6a6f79;letter-spacing:0.64px;">Feb 2, 2022 @ 18:14:26.891</div>
<div class="t" style="left:634.4px;top:715.64px;font-size:12.9px;color:#6a6f79;-webkit-text-stroke:0.28px #6a6f79;letter-spacing:0.43px;">Endpoint network event</div>
<div class="t" style="left:808.4px;top:715.64px;font-size:12.9px;color:#6a6f79;-webkit-text-stroke:0.28px #6a6f79;letter-spacing:0.09px;">DESKTOP-Q1SL9P2</div>
<div class="t" style="left:982.4px;top:715.64px;font-size:12.9px;color:#6a6f79;-webkit-text-stroke:0.28px #6a6f79;letter-spacing:0.51px;">endpoint</div>
<div class="t" style="left:1156.6px;top:715.64px;font-size:12.9px;color:#6a6f79;-webkit-text-stroke:0.28px #6a6f79;letter-spacing:0.49px;">endpoint.events.network</div>
<div class="t" style="left:1330.6px;top:715.64px;font-size:12.9px;color:#6a6f79;-webkit-text-stroke:0.28px #6a6f79;letter-spacing:0.42px;">disconnect_received</div>
<div class="t" style="left:1504.8px;top:715.64px;font-size:12.9px;color:#6a6f79;-webkit-text-stroke:0.28px #6a6f79;letter-spacing:-0.04px;">SYSTEM</div>
<div class="t" style="left:1681px;top:715.64px;font-size:12.9px;color:#6a6f79;-webkit-text-stroke:0.28px #6a6f79;letter-spacing:0.88px;">192.168.10.10</div>
<div class="t" style="left:1854.8px;top:715.64px;font-size:12.9px;color:#6a6f79;-webkit-text-stroke:0.28px #6a6f79;letter-spacing:0.88px;">192.168.10.30</div>
<svg class="b" style="left:305.4px;top:746.3px;" width="16.8" height="16.8" viewBox="0 0 8.4 8.4"><path d="M5.3 0.6H7.8V3.1M7.8 0.6L0.6 7.8M0.6 5.3V7.8H3.1" fill="none" stroke="#3087d6" stroke-width="0.64" stroke-linecap="round" stroke-linejoin="round"/></svg>
<svg class="b" style="left:334.2px;top:745.5px;" width="18" height="18" viewBox="0 0 9 9"><circle cx="4.5" cy="1.4" r="1" fill="none" stroke="#3087d6" stroke-width="0.64"/><path d="M4.5 2.4V4.5M0.4 4.5H8.6M1.9 4.5V6.2M7.1 4.5V6.2" fill="none" stroke="#3087d6" stroke-width="0.64"/><circle cx="1.9" cy="7.4" r="1.1" fill="none" stroke="#3087d6" stroke-width="0.64"/><circle cx="7.1" cy="7.4" r="1.1" fill="none" stroke="#3087d6" stroke-width="0.64"/></svg>
<svg class="b" style="left:364.4px;top:751.7px;" width="19.6" height="5.6" viewBox="0 0 9.8 2.8"><circle cx="1.4" cy="1.4" r="1.2" fill="#d2d5dc"/><circle cx="4.8" cy="1.4" r="1.2" fill="#d2d5dc"/><circle cx="8.2" cy="1.4" r="1.2" fill="#d2d5dc"/></svg>
<div class="t" style="left:429px;top:752.3px;font-size:12.9px;color:#6a6f79;-webkit-text-stroke:0.28px #6a6f79;letter-spacing:0.64px;">Feb 2, 2022 @ 18:14:22.749</div>
<div class="t" style="left:634.4px;top:752.3px;font-size:12.9px;color:#6a6f79;-webkit-text-stroke:0.28px #6a6f79;letter-spacing:0.49px;">Network connection det...</div>
<div class="t" style="left:808.4px;top:752.3px;font-size:12.9px;color:#6a6f79;-webkit-text-stroke:0.28px #6a6f79;letter-spacing:0.09px;">DESKTOP-Q1SL9P2</div>
<div class="t" style="left:982.4px;top:752.3px;font-size:12.9px;color:#6a6f79;-webkit-text-stroke:0.28px #6a6f79;letter-spacing:0.59px;">windows</div>
<div class="t" style="left:1156.6px;top:752.3px;font-size:12.9px;color:#6a6f79;-webkit-text-stroke:0.28px #6a6f79;letter-spacing:0.31px;">windows.sysmon_opera...</div>
<div class="t" style="left:1330.6px;top:752.3px;font-size:12.9px;color:#6a6f79;-webkit-text-stroke:0.28px #6a6f79;letter-spacing:0.49px;">Network connection det...</div>
<div class="t" style="left:1504.8px;top:752.3px;font-size:12.9px;color:#6a6f79;-webkit-text-stroke:0.28px #6a6f79;letter-spacing:-0.04px;">SYSTEM</div>
<div class="t" style="left:1681px;top:752.3px;font-size:12.9px;color:#6a6f79;-webkit-text-stroke:0.28px #6a6f79;letter-spacing:0.88px;">192.168.10.10</div>
<div class="t" style="left:1854.8px;top:752.3px;font-size:12.9px;color:#6a6f79;-webkit-text-stroke:0.28px #6a6f79;letter-spacing:0.88px;">192.168.10.30</div>
<svg class="b" style="left:305.4px;top:782.96px;" width="16.8" height="16.8" viewBox="0 0 8.4 8.4"><path d="M5.3 0.6H7.8V3.1M7.8 0.6L0.6 7.8M0.6 5.3V7.8H3.1" fill="none" stroke="#3087d6" stroke-width="0.64" stroke-linecap="round" stroke-linejoin="round"/></svg>
<svg class="b" style="left:334.2px;top:782.16px;" width="18" height="18" viewBox="0 0 9 9"><circle cx="4.5" cy="1.4" r="1" fill="none" stroke="#3087d6" stroke-width="0.64"/><path d="M4.5 2.4V4.5M0.4 4.5H8.6M1.9 4.5V6.2M7.1 4.5V6.2" fill="none" stroke="#3087d6" stroke-width="0.64"/><circle cx="1.9" cy="7.4" r="1.1" fill="none" stroke="#3087d6" stroke-width="0.64"/><circle cx="7.1" cy="7.4" r="1.1" fill="none" stroke="#3087d6" stroke-width="0.64"/></svg>
<svg class="b" style="left:364.4px;top:788.36px;" width="19.6" height="5.6" viewBox="0 0 9.8 2.8"><circle cx="1.4" cy="1.4" r="1.2" fill="#d2d5dc"/><circle cx="4.8" cy="1.4" r="1.2" fill="#d2d5dc"/><circle cx="8.2" cy="1.4" r="1.2" fill="#d2d5dc"/></svg>
<svg class="b" style="left:394px;top:781.76px;" width="18.4" height="19.2" viewBox="0 0 9.2 9.6"><path d="M4.6 0.5L8.5 2.7V6.9L4.6 9.1L0.7 6.9V2.7Z" fill="none" stroke="#3087d6" stroke-width="0.64" stroke-linejoin="round"/><path d="M0.9 2.9L4.6 5L8.3 2.9M4.6 5V9" fill="none" stroke="#3087d6" stroke-width="0.64" stroke-linejoin="round"/></svg>
<div class="t" style="left:429px;top:788.96px;font-size:12.9px;color:#6a6f79;-webkit-text-stroke:0.28px #6a6f79;letter-spacing:0.64px;">Feb 2, 2022 @ 18:14:22.749</div>
<div class="t" style="left:634.4px;top:788.96px;font-size:12.9px;color:#6a6f79;-webkit-text-stroke:0.28px #6a6f79;letter-spacing:0.49px;">Network connection det...</div>
<div class="t" style="left:808.4px;top:788.96px;font-size:12.9px;color:#6a6f79;-webkit-text-stroke:0.28px #6a6f79;letter-spacing:0.09px;">DESKTOP-Q1SL9P2</div>
<div class="t" style="left:982.4px;top:788.96px;font-size:12.9px;color:#6a6f79;-webkit-text-stroke:0.28px #6a6f79;letter-spacing:0.66px;">sysmon</div>
<div class="t" style="left:1156.6px;top:788.96px;font-size:12.9px;color:#6a6f79;-webkit-text-stroke:0.28px #6a6f79;">—</div>
<div class="t" style="left:1330.6px;top:788.96px;font-size:12.9px;color:#6a6f79;-webkit-text-stroke:0.28px #6a6f79;letter-spacing:0.49px;">Network connection det...</div>
<div class="t" style="left:1504.8px;top:788.96px;font-size:12.9px;color:#6a6f79;-webkit-text-stroke:0.28px #6a6f79;letter-spacing:-0.04px;">SYSTEM</div>
<div class="t" style="left:1681px;top:788.96px;font-size:12.9px;color:#6a6f79;-webkit-text-stroke:0.28px #6a6f79;letter-spacing:0.88px;">192.168.10.10</div>
<div class="t" style="left:1854.8px;top:788.96px;font-size:12.9px;color:#6a6f79;-webkit-text-stroke:0.28px #6a6f79;letter-spacing:0.88px;">192.168.10.30</div>
<svg class="b" style="left:305.4px;top:819.62px;" width="16.8" height="16.8" viewBox="0 0 8.4 8.4"><path d="M5.3 0.6H7.8V3.1M7.8 0.6L0.6 7.8M0.6 5.3V7.8H3.1" fill="none" stroke="#3087d6" stroke-width="0.64" stroke-linecap="round" stroke-linejoin="round"/></svg>
<svg class="b" style="left:334.2px;top:818.82px;" width="18" height="18" viewBox="0 0 9 9"><circle cx="4.5" cy="1.4" r="1" fill="none" stroke="#3087d6" stroke-width="0.64"/><path d="M4.5 2.4V4.5M0.4 4.5H8.6M1.9 4.5V6.2M7.1 4.5V6.2" fill="none" stroke="#3087d6" stroke-width="0.64"/><circle cx="1.9" cy="7.4" r="1.1" fill="none" stroke="#3087d6" stroke-width="0.64"/><circle cx="7.1" cy="7.4" r="1.1" fill="none" stroke="#3087d6" stroke-width="0.64"/></svg>
<svg class="b" style="left:364.4px;top:825.02px;" width="19.6" height="5.6" viewBox="0 0 9.8 2.8"><circle cx="1.4" cy="1.4" r="1.2" fill="#4596db"/><circle cx="4.8" cy="1.4" r="1.2" fill="#4596db"/><circle cx="8.2" cy="1.4" r="1.2" fill="#4596db"/></svg>
<svg class="b" style="left:394px;top:818.42px;" width="18.4" height="19.2" viewBox="0 0 9.2 9.6"><path d="M4.6 0.5L8.5 2.7V6.9L4.6 9.1L0.7 6.9V2.7Z" fill="none" stroke="#3087d6" stroke-width="0.64" stroke-linejoin="round"/><path d="M0.9 2.9L4.6 5L8.3 2.9M4.6 5V9" fill="none" stroke="#3087d6" stroke-width="0.64" stroke-linejoin="round"/></svg>
<div class="t" style="left:429px;top:825.62px;font-size:12.9px;color:#6a6f79;-webkit-text-stroke:0.28px #6a6f79;letter-spacing:0.64px;">Feb 2, 2022 @ 18:14:22.745</div>
<div class="t" style="left:634.4px;top:825.62px;font-size:12.9px;color:#6a6f79;-webkit-text-stroke:0.28px #6a6f79;letter-spacing:0.43px;">Endpoint network event</div>
<div class="t" style="left:808.4px;top:825.62px;font-size:12.9px;color:#6a6f79;-webkit-text-stroke:0.28px #6a6f79;letter-spacing:0.09px;">DESKTOP-Q1SL9P2</div>
<div class="t" style="left:982.4px;top:825.62px;font-size:12.9px;color:#6a6f79;-webkit-text-stroke:0.28px #6a6f79;letter-spacing:0.51px;">endpoint</div>
<div class="t" style="left:1156.6px;top:825.62px;font-size:12.9px;color:#6a6f79;-webkit-text-stroke:0.28px #6a6f79;letter-spacing:0.49px;">endpoint.events.network</div>
<div class="t" style="left:1330.6px;top:825.62px;font-size:12.9px;color:#6a6f79;-webkit-text-stroke:0.28px #6a6f79;letter-spacing:0.51px;">connection_attempted</div>
<div class="t" style="left:1504.8px;top:825.62px;font-size:12.9px;color:#6a6f79;-webkit-text-stroke:0.28px #6a6f79;letter-spacing:-0.04px;">SYSTEM</div>
<div class="t" style="left:1681px;top:825.62px;font-size:12.9px;color:#6a6f79;-webkit-text-stroke:0.28px #6a6f79;letter-spacing:0.88px;">192.168.10.10</div>
<div class="t" style="left:1854.8px;top:825.62px;font-size:12.9px;color:#6a6f79;-webkit-text-stroke:0.28px #6a6f79;letter-spacing:0.88px;">192.168.10.30</div>
<svg class="b" style="left:305.4px;top:856.28px;" width="16.8" height="16.8" viewBox="0 0 8.4 8.4"><path d="M5.3 0.6H7.8V3.1M7.8 0.6L0.6 7.8M0.6 5.3V7.8H3.1" fill="none" stroke="#3087d6" stroke-width="0.64" stroke-linecap="round" stroke-linejoin="round"/></svg>
<svg class="b" style="left:334.2px;top:855.48px;" width="18" height="18" viewBox="0 0 9 9"><circle cx="4.5" cy="1.4" r="1" fill="none" stroke="#3087d6" stroke-width="0.64"/><path d="M4.5 2.4V4.5M0.4 4.5H8.6M1.9 4.5V6.2M7.1 4.5V6.2" fill="none" stroke="#3087d6" stroke-width="0.64"/><circle cx="1.9" cy="7.4" r="1.1" fill="none" stroke="#3087d6" stroke-width="0.64"/><circle cx="7.1" cy="7.4" r="1.1" fill="none" stroke="#3087d6" stroke-width="0.64"/></svg>
<svg class="b" style="left:364.4px;top:861.68px;" width="19.6" height="5.6" viewBox="0 0 9.8 2.8"><circle cx="1.4" cy="1.4" r="1.2" fill="#4596db"/><circle cx="4.8" cy="1.4" r="1.2" fill="#4596db"/><circle cx="8.2" cy="1.4" r="1.2" fill="#4596db"/></svg>
<svg class="b" style="left:394px;top:855.08px;" width="18.4" height="19.2" viewBox="0 0 9.2 9.6"><path d="M4.6 0.5L8.5 2.7V6.9L4.6 9.1L0.7 6.9V2.7Z" fill="none" stroke="#3087d6" stroke-width="0.64" stroke-linejoin="round"/><path d="M0.9 2.9L4.6 5L8.3 2.9M4.6 5V9" fill="none" stroke="#3087d6" stroke-width="0.64" stroke-linejoin="round"/></svg>
<div class="t" style="left:429px;top:862.28px;font-size:12.9px;color:#6a6f79;-webkit-text-stroke:0.28px #6a6f79;letter-spacing:0.64px;">Feb 2, 2022 @ 18:12:54.597</div>
<div class="t" style="left:634.4px;top:862.28px;font-size:12.9px;color:#6a6f79;-webkit-text-stroke:0.28px #6a6f79;letter-spacing:0.33px;">Endpoint file event</div>
<div class="t" style="left:808.4px;top:862.28px;font-size:12.9px;color:#6a6f79;-webkit-text-stroke:0.28px #6a6f79;letter-spacing:0.09px;">DESKTOP-Q1SL9P2</div>
<div class="t" style="left:982.4px;top:862.28px;font-size:12.9px;color:#6a6f79;-webkit-text-stroke:0.28px #6a6f79;letter-spacing:0.51px;">endpoint</div>
<div class="t" style="left:1156.6px;top:862.28px;font-size:12.9px;color:#6a6f79;-webkit-text-stroke:0.28px #6a6f79;letter-spacing:0.46px;">endpoint.events.file</div>
<div class="t" style="left:1330.6px;top:862.28px;font-size:12.9px;color:#6a6f79;-webkit-text-stroke:0.28px #6a6f79;letter-spacing:0.54px;">overwrite</div>
<div class="t" style="left:1504.8px;top:862.28px;font-size:12.9px;color:#6a6f79;-webkit-text-stroke:0.28px #6a6f79;letter-spacing:-0.31px;">NETWORK SERVICE</div>
<div class="t" style="left:1681px;top:862.28px;font-size:12.9px;color:#6a6f79;-webkit-text-stroke:0.28px #6a6f79;">—</div>
<div class="t" style="left:1854.8px;top:862.28px;font-size:12.9px;color:#6a6f79;-webkit-text-stroke:0.28px #6a6f79;">—</div>
<svg class="b" style="left:305.4px;top:892.94px;" width="16.8" height="16.8" viewBox="0 0 8.4 8.4"><path d="M5.3 0.6H7.8V3.1M7.8 0.6L0.6 7.8M0.6 5.3V7.8H3.1" fill="none" stroke="#3087d6" stroke-width="0.64" stroke-linecap="round" stroke-linejoin="round"/></svg>
<svg class="b" style="left:334.2px;top:892.14px;" width="18" height="18" viewBox="0 0 9 9"><circle cx="4.5" cy="1.4" r="1" fill="none" stroke="#3087d6" stroke-width="0.64"/><path d="M4.5 2.4V4.5M0.4 4.5H8.6M1.9 4.5V6.2M7.1 4.5V6.2" fill="none" stroke="#3087d6" stroke-width="0.64"/><circle cx="1.9" cy="7.4" r="1.1" fill="none" stroke="#3087d6" stroke-width="0.64"/><circle cx="7.1" cy="7.4" r="1.1" fill="none" stroke="#3087d6" stroke-width="0.64"/></svg>
<svg class="b" style="left:364.4px;top:898.34px;" width="19.6" height="5.6" viewBox="0 0 9.8 2.8"><circle cx="1.4" cy="1.4" r="1.2" fill="#4596db"/><circle cx="4.8" cy="1.4" r="1.2" fill="#4596db"/><circle cx="8.2" cy="1.4" r="1.2" fill="#4596db"/></svg>
<svg class="b" style="left:394px;top:891.74px;" width="18.4" height="19.2" viewBox="0 0 9.2 9.6"><path d="M4.6 0.5L8.5 2.7V6.9L4.6 9.1L0.7 6.9V2.7Z" fill="none" stroke="#3087d6" stroke-width="0.64" stroke-linejoin="round"/><path d="M0.9 2.9L4.6 5L8.3 2.9M4.6 5V9" fill="none" stroke="#3087d6" stroke-width="0.64" stroke-linejoin="round"/></svg>
<div class="t" style="left:429px;top:898.94px;font-size:12.9px;color:#6a6f79;-webkit-text-stroke:0.28px #6a6f79;letter-spacing:0.64px;">Feb 2, 2022 @ 18:12:42.164</div>
<div class="t" style="left:634.4px;top:898.94px;font-size:12.9px;color:#6a6f79;-webkit-text-stroke:0.28px #6a6f79;letter-spacing:0.3px;">Endpoint DLL load event</div>
<div class="t" style="left:808.4px;top:898.94px;font-size:12.9px;color:#6a6f79;-webkit-text-stroke:0.28px #6a6f79;letter-spacing:0.09px;">DESKTOP-Q1SL9P2</div>
<div class="t" style="left:982.4px;top:898.94px;font-size:12.9px;color:#6a6f79;-webkit-text-stroke:0.28px #6a6f79;letter-spacing:0.51px;">endpoint</div>
<div class="t" style="left:1156.6px;top:898.94px;font-size:12.9px;color:#6a6f79;-webkit-text-stroke:0.28px #6a6f79;letter-spacing:0.43px;">endpoint.events.library</div>
<div class="t" style="left:1330.6px;top:898.94px;font-size:12.9px;color:#6a6f79;-webkit-text-stroke:0.28px #6a6f79;letter-spacing:0.25px;">load</div>
<div class="t" style="left:1504.8px;top:898.94px;font-size:12.9px;color:#6a6f79;-webkit-text-stroke:0.28px #6a6f79;letter-spacing:-0.04px;">SYSTEM</div>
<div class="t" style="left:1681px;top:898.94px;font-size:12.9px;color:#6a6f79;-webkit-text-stroke:0.28px #6a6f79;">—</div>
<div class="t" style="left:1854.8px;top:898.94px;font-size:12.9px;color:#6a6f79;-webkit-text-stroke:0.28px #6a6f79;">—</div>
<svg class="b" style="left:305.4px;top:929.6px;" width="16.8" height="16.8" viewBox="0 0 8.4 8.4"><path d="M5.3 0.6H7.8V3.1M7.8 0.6L0.6 7.8M0.6 5.3V7.8H3.1" fill="none" stroke="#3087d6" stroke-width="0.64" stroke-linecap="round" stroke-linejoin="round"/></svg>
<svg class="b" style="left:334.2px;top:928.8px;" width="18" height="18" viewBox="0 0 9 9"><circle cx="4.5" cy="1.4" r="1" fill="none" stroke="#3087d6" stroke-width="0.64"/><path d="M4.5 2.4V4.5M0.4 4.5H8.6M1.9 4.5V6.2M7.1 4.5V6.2" fill="none" stroke="#3087d6" stroke-width="0.64"/><circle cx="1.9" cy="7.4" r="1.1" fill="none" stroke="#3087d6" stroke-width="0.64"/><circle cx="7.1" cy="7.4" r="1.1" fill="none" stroke="#3087d6" stroke-width="0.64"/></svg>
<svg class="b" style="left:364.4px;top:935px;" width="19.6" height="5.6" viewBox="0 0 9.8 2.8"><circle cx="1.4" cy="1.4" r="1.2" fill="#4596db"/><circle cx="4.8" cy="1.4" r="1.2" fill="#4596db"/><circle cx="8.2" cy="1.4" r="1.2" fill="#4596db"/></svg>
<svg class="b" style="left:394px;top:928.4px;" width="18.4" height="19.2" viewBox="0 0 9.2 9.6"><path d="M4.6 0.5L8.5 2.7V6.9L4.6 9.1L0.7 6.9V2.7Z" fill="none" stroke="#3087d6" stroke-width="0.64" stroke-linejoin="round"/><path d="M0.9 2.9L4.6 5L8.3 2.9M4.6 5V9" fill="none" stroke="#3087d6" stroke-width="0.64" stroke-linejoin="round"/></svg>
<div class="t" style="left:429px;top:935.6px;font-size:12.9px;color:#6a6f79;-webkit-text-stroke:0.28px #6a6f79;letter-spacing:0.67px;">Feb 2, 2022 @ 18:12:42.113</div>
<div class="t" style="left:634.4px;top:935.6px;font-size:12.9px;color:#6a6f79;-webkit-text-stroke:0.28px #6a6f79;letter-spacing:0.3px;">Endpoint DLL load event</div>
<div class="t" style="left:808.4px;top:935.6px;font-size:12.9px;color:#6a6f79;-webkit-text-stroke:0.28px #6a6f79;letter-spacing:0.09px;">DESKTOP-Q1SL9P2</div>
<div class="t" style="left:982.4px;top:935.6px;font-size:12.9px;color:#6a6f79;-webkit-text-stroke:0.28px #6a6f79;letter-spacing:0.51px;">endpoint</div>
<div class="t" style="left:1156.6px;top:935.6px;font-size:12.9px;color:#6a6f79;-webkit-text-stroke:0.28px #6a6f79;letter-spacing:0.43px;">endpoint.events.library</div>
<div class="t" style="left:1330.6px;top:935.6px;font-size:12.9px;color:#6a6f79;-webkit-text-stroke:0.28px #6a6f79;letter-spacing:0.25px;">load</div>
<div class="t" style="left:1504.8px;top:935.6px;font-size:12.9px;color:#6a6f79;-webkit-text-stroke:0.28px #6a6f79;letter-spacing:-0.04px;">SYSTEM</div>
<div class="t" style="left:1681px;top:935.6px;font-size:12.9px;color:#6a6f79;-webkit-text-stroke:0.28px #6a6f79;">—</div>
<div class="t" style="left:1854.8px;top:935.6px;font-size:12.9px;color:#6a6f79;-webkit-text-stroke:0.28px #6a6f79;">—</div>
<div class="b" style="left:0px;top:950px;width:2048px;height:42px;background:#ffffff;box-shadow:0 -1px 0 #eceef3, 0 -4px 8px rgba(0,0,0,0.05);"></div>
<svg class="b" style="left:16px;top:971.4px;" width="17.2" height="17.2" viewBox="0 0 8.6 8.6"><circle cx="4.3" cy="4.3" r="3.85" fill="none" stroke="#3f8fd6" stroke-width="0.7"/><path d="M4.3 2.3V6.3M2.3 4.3H6.3" stroke="#3f8fd6" stroke-width="0.8" stroke-linecap="round"/></svg>
<div class="b" style="left:59px;top:976.2px;width:9.2px;height:9.2px;background:#b8860b;border-radius:50%;"></div>
<div class="t" style="left:77px;top:981.4px;font-size:14.6px;color:#1a73be;-webkit-text-stroke:0.32px #1a73be;letter-spacing:0.8px;">Untitled timeline</div>
</div></body></html>
